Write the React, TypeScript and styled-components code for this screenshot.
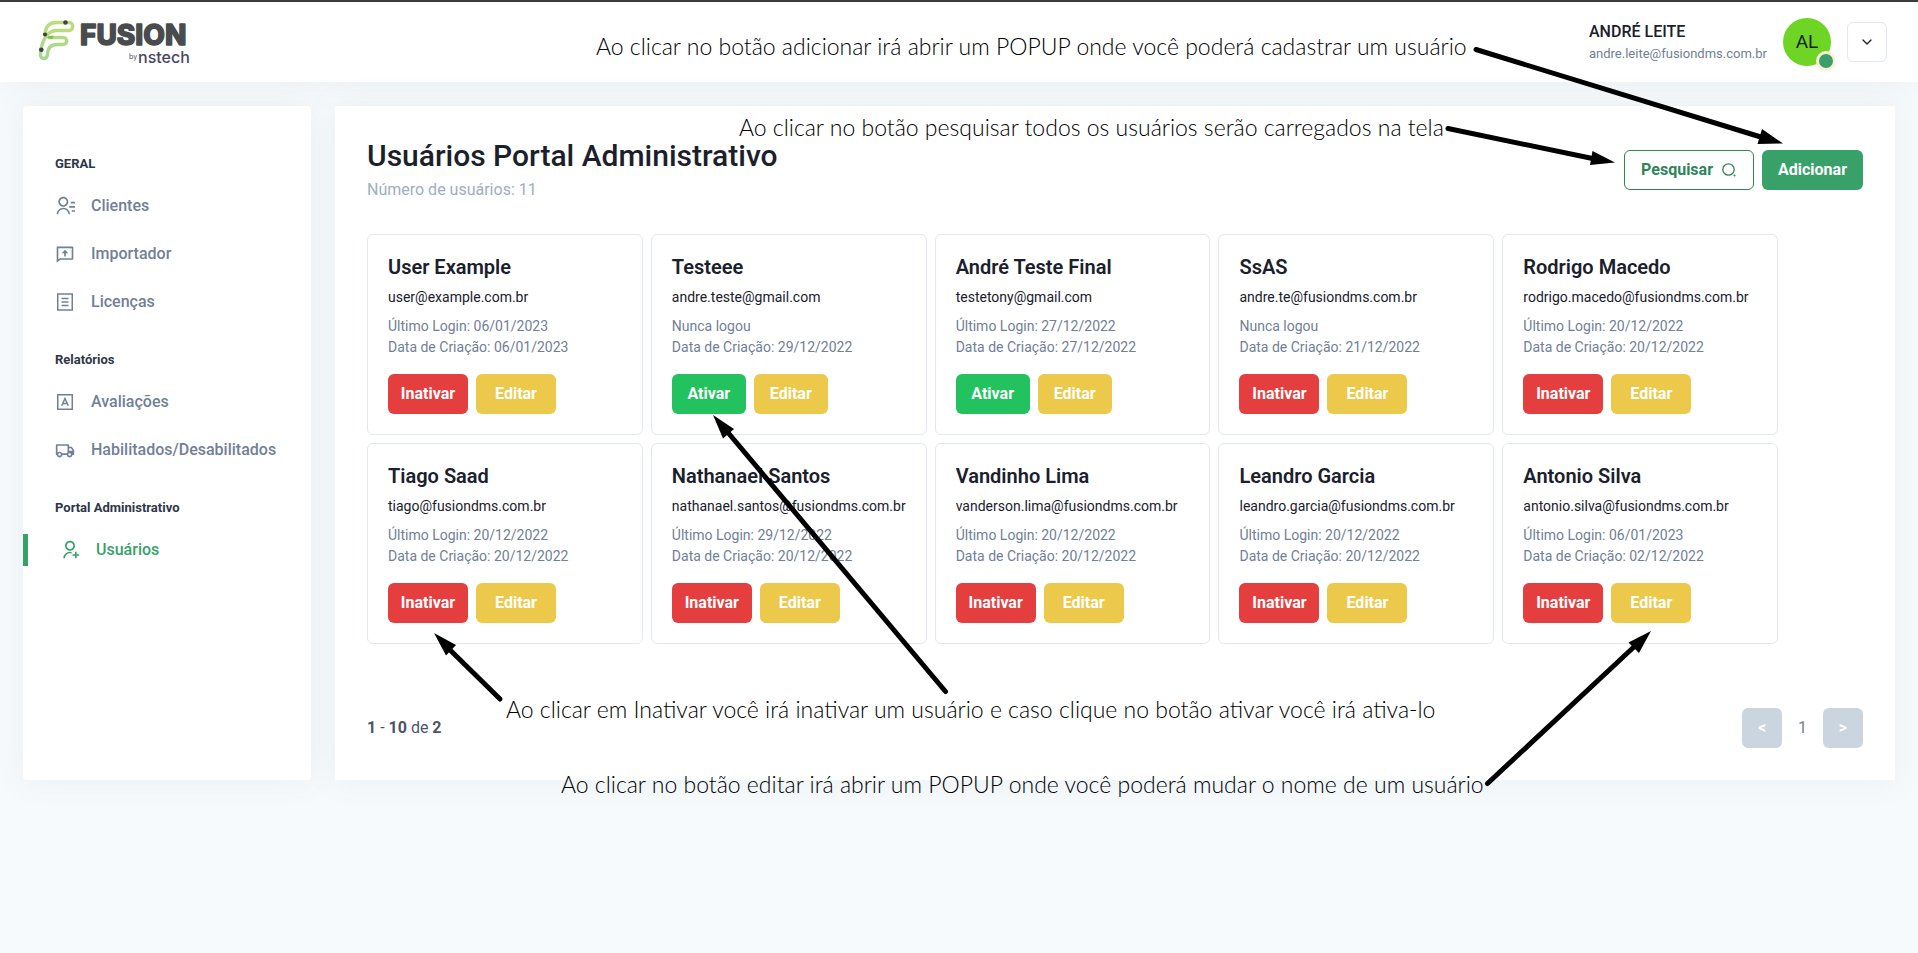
import React from "react";
import styled, { createGlobalStyle, css } from "styled-components";
import {
  RiContactsLine,
  RiChatUploadLine,
  RiTruckLine,
  RiUserAddLine,
} from "react-icons/ri";
import { FiChevronDown } from "react-icons/fi";

const GlobalStyle = createGlobalStyle`
  *, *::before, *::after { box-sizing: border-box; }
  body {
    margin: 0;
    background: #f7fafc;
    color: #1a202c;
    font-family: Roboto, "Liberation Sans", sans-serif;
    font-size: 16px;
    line-height: 24px;
  }
  h1, h2, h3, p, ul { margin: 0; padding: 0; }
  ul { list-style: none; }
  a { color: inherit; text-decoration: none; }
  button { font: inherit; cursor: pointer; }
`;

const Page = styled.div`
  position: relative;
  min-height: 100vh;
  border-top: 2px solid #3c3a3c;
`;

const softShadow = css`
  box-shadow: 0 0 32px rgba(82, 110, 140, 0.08);
`;

const TopBar = styled.header`
  display: flex;
  align-items: center;
  justify-content: space-between;
  height: 80px;
  padding: 0 31px 0 37px;
  background: #fff;
  ${softShadow}
`;

const LogoMark = styled.svg`
  display: block;
  overflow: visible;
`;

const Account = styled.div`
  display: flex;
  align-items: center;
  gap: 16px;
`;

const AccountName = styled.p`
  font-weight: 500;
`;

const AccountEmail = styled.p`
  font-size: 13px;
  line-height: 20px;
  color: #718096;
`;

const Avatar = styled.div`
  position: relative;
  display: grid;
  place-items: center;
  width: 48px;
  height: 48px;
  border-radius: 50%;
  background: #6fd525;
  font-size: 19px;
`;

const StatusDot = styled.span`
  position: absolute;
  right: -5px;
  bottom: -5px;
  width: 20px;
  height: 20px;
  border: 3px solid #ffefd5;
  border-radius: 50%;
  background: #38a169;
`;

const MenuButton = styled.button`
  display: grid;
  place-items: center;
  width: 40px;
  height: 40px;
  padding: 0;
  border: 1px solid #e2e8f0;
  border-radius: 6px;
  background: #fff;
  color: #1a202c;
`;

const Body = styled.div`
  display: flex;
  gap: 24px;
  padding: 24px 23px;
`;

const Sidebar = styled.nav`
  display: flex;
  flex-direction: column;
  flex: none;
  gap: 32px;
  width: 288px;
  padding: 48px 0;
  border-radius: 4px;
  background: #fff;
  ${softShadow}
`;

const NavHeading = styled.h2`
  margin-bottom: 16px;
  padding-left: 32px;
  font-size: 13px;
  font-weight: 700;
  line-height: 20px;
  color: #2d3748;
`;

const NavList = styled.ul`
  display: grid;
  gap: 16px;
`;

const NavLink = styled.a<{ $active?: boolean }>`
  display: flex;
  align-items: center;
  gap: 16px;
  height: 32px;
  padding-left: 32px;
  border-left: 0 solid #38a169;
  font-weight: 500;
  color: #718096;

  ${(p) =>
    p.$active &&
    css`
      border-left-width: 5px;
      color: #38a169;
    `}
`;

const Panel = styled.main`
  flex: 1;
  min-width: 0;
  padding: 32px;
  background: #fff;
  ${softShadow}
`;

const PanelHeader = styled.div`
  display: flex;
  align-items: center;
  justify-content: space-between;
  margin-bottom: 32px;
`;

const Title = styled.h1`
  margin-bottom: 4px;
  font-size: 30px;
  font-weight: 500;
  line-height: 36px;
`;

const Subtitle = styled.p`
  color: #a0aec0;
`;

const Row = styled.div`
  display: flex;
  gap: 8px;
`;

type Tone = "primary" | "outline" | "danger" | "success" | "warning";

const tones = {
  primary: css`
    padding: 0 16px;
    background: #38a169;
    color: #fff;
  `,
  outline: css`
    padding: 0 16px;
    border: 1px solid #2f855a;
    background: #fff;
    color: #2f855a;
  `,
  danger: css`
    padding: 0;
    background: #e53e3e;
    color: #fff;
  `,
  success: css`
    padding: 0;
    background: #22c35e;
    color: #fff;
  `,
  warning: css`
    padding: 0;
    background: #ecc94b;
    color: #fff;
  `,
};

const Button = styled.button<{ $tone: Tone }>`
  display: inline-flex;
  align-items: center;
  justify-content: center;
  gap: 8px;
  height: 40px;
  border: 0;
  border-radius: 6px;
  font-weight: 700;
  ${(p) => tones[p.$tone]}
`;

const CardGrid = styled.ul`
  display: grid;
  grid-template-columns: repeat(5, 1fr);
  gap: 8px;
  width: fit-content;
`;

const Card = styled.li`
  padding: 20px;
  border: 1px solid #e2e8f0;
  border-radius: 6px;
`;

const CardName = styled.h3`
  margin-bottom: 8px;
  font-size: 20px;
  font-weight: 600;
  line-height: 24px;
`;

const CardEmail = styled.p`
  margin-bottom: 8px;
  font-size: 14px;
  line-height: 21px;
`;

const CardMeta = styled.p`
  font-size: 14px;
  line-height: 21px;
  color: #718096;
`;

const CardActions = styled.div<{ $wide: boolean }>`
  display: grid;
  grid-template-columns: repeat(2, ${(p) => (p.$wide ? 80 : 74)}px);
  gap: 8px;
  margin-top: 16px;
`;

const Pager = styled.div`
  display: flex;
  align-items: center;
  justify-content: space-between;
  margin-top: 64px;
  color: #4a5568;
`;

const PagerControls = styled.div`
  display: flex;
  align-items: center;
  gap: 16px;
  color: #718096;
`;

const PageButton = styled.button`
  width: 40px;
  height: 40px;
  padding: 0;
  border: 0;
  border-radius: 6px;
  background: #cbd5e0;
  color: #fff;
  font-weight: 700;
`;

const Notes = styled.div`
  position: absolute;
  inset: -2px 0 0;
  overflow: hidden;
  pointer-events: none;
`;

const Note = styled.p<{ $x: number; $y: number }>`
  position: absolute;
  left: ${(p) => p.$x}px;
  top: ${(p) => p.$y}px;
  font-family: Lato, "Open Sans", sans-serif;
  font-size: 23px;
  font-weight: 300;
  line-height: 30px;
  white-space: nowrap;
  color: #000;
`;

const Arrows = styled.svg`
  position: absolute;
  top: 0;
  left: 0;
`;

const Logo = () => (
  <LogoMark width="156" height="52" viewBox="37 16 156 52" role="img" aria-label="Fusion by nstech">
    <defs>
      <linearGradient id="leaf" x1="0" y1="0" x2="0" y2="1">
        <stop offset="0" stopColor="#c0dc78" />
        <stop offset="1" stopColor="#a2d894" />
      </linearGradient>
    </defs>
    <path
      d="M45 33C46 26 50 22.500 56 22.500H69C74 22.500 74 30.500 69 30.500H56C48 31 43 39 41 49L40.500 54C40 60 47 60 47.500 54C48 47 52 44.500 57 44.500H63C68 44.500 68 37.500 63 37.500H49"
      fill="none"
      stroke="url(#leaf)"
      strokeWidth="3.400"
      strokeLinecap="round"
    />
    <path d="M47 38q2-3 7-2l-2 3z" fill="#7cc142" />
    <g fill="#3e4345">
      <circle cx="65.500" cy="22.500" r="2.300" />
      <circle cx="45" cy="34.500" r="2.100" />
      <circle cx="41.300" cy="49.800" r="2.300" />
    </g>
    <text
      x="80"
      y="45"
      fontFamily="Inter, sans-serif"
      fontSize="28"
      fontWeight="800"
      fill="#484c4e"
      stroke="#484c4e"
      strokeWidth="1.400"
      strokeLinejoin="round"
    >
      FUSION
    </text>
    <text x="129" y="59" fontFamily="Inter, sans-serif" fontSize="7" fill="#4b4660">
      by
    </text>
    <text x="138" y="63" fontFamily="Inter, sans-serif" fontSize="16" fontWeight="500" fill="#4b4660">
      nstech
    </text>
  </LogoMark>
);

const ListIcon = () => (
  <svg width="20" height="20" viewBox="0 0 20 20" fill="none" stroke="currentColor" strokeWidth="1.500">
    <rect x="2.750" y="2" width="14.500" height="16" />
    <path d="M6.500 6.500h7M6.500 10h7M6.500 13.500h7" />
  </svg>
);

const GradeIcon = () => (
  <svg width="20" height="20" viewBox="0 0 20 20" fill="none" stroke="currentColor" strokeWidth="1.500">
    <rect x="2.750" y="2.750" width="14.500" height="14.500" />
    <path d="M6.700 13.800L10 6.500l3.300 7.300M8 11.500h4" />
  </svg>
);

const SearchIcon = () => (
  <svg width="16" height="16" viewBox="0 0 16 16" fill="none" stroke="currentColor" strokeWidth="1.300">
    <circle cx="7.500" cy="7.500" r="5.700" />
    <path d="M12.700 12.700l1.600 1.600" />
  </svg>
);

type NavItem = { label: string; icon: React.ReactNode; active?: boolean };

const navigation: { heading: string; items: NavItem[] }[] = [
  {
    heading: "GERAL",
    items: [
      { label: "Clientes", icon: <RiContactsLine size={20} /> },
      { label: "Importador", icon: <RiChatUploadLine size={20} /> },
      { label: "Licenças", icon: <ListIcon /> },
    ],
  },
  {
    heading: "Relatórios",
    items: [
      { label: "Avaliações", icon: <GradeIcon /> },
      { label: "Habilitados/Desabilitados", icon: <RiTruckLine size={20} /> },
    ],
  },
  {
    heading: "Portal Administrativo",
    items: [{ label: "Usuários", icon: <RiUserAddLine size={20} />, active: true }],
  },
];

const users = [
  { name: "User Example", email: "user@example.com.br", login: "06/01/2023", created: "06/01/2023", active: true },
  { name: "Testeee", email: "andre.teste@gmail.com", login: null, created: "29/12/2022", active: false },
  { name: "André Teste Final", email: "testetony@gmail.com", login: "27/12/2022", created: "27/12/2022", active: false },
  { name: "SsAS", email: "andre.te@fusiondms.com.br", login: null, created: "21/12/2022", active: true },
  { name: "Rodrigo Macedo", email: "rodrigo.macedo@fusiondms.com.br", login: "20/12/2022", created: "20/12/2022", active: true },
  { name: "Tiago Saad", email: "tiago@fusiondms.com.br", login: "20/12/2022", created: "20/12/2022", active: true },
  { name: "Nathanael Santos", email: "nathanael.santos@fusiondms.com.br", login: "29/12/2022", created: "20/12/2022", active: true },
  { name: "Vandinho Lima", email: "vanderson.lima@fusiondms.com.br", login: "20/12/2022", created: "20/12/2022", active: true },
  { name: "Leandro Garcia", email: "leandro.garcia@fusiondms.com.br", login: "20/12/2022", created: "20/12/2022", active: true },
  { name: "Antonio Silva", email: "antonio.silva@fusiondms.com.br", login: "06/01/2023", created: "02/12/2022", active: true },
];

const notes = [
  { x: 596, y: 31, text: "Ao clicar no botão adicionar irá abrir um POPUP onde você poderá cadastrar um usuário" },
  { x: 739, y: 112, text: "Ao clicar no botão pesquisar todos os usuários serão carregados na tela" },
  { x: 506, y: 694, text: "Ao clicar em Inativar você irá inativar um usuário e caso clique no botão ativar você irá ativa-lo" },
  { x: 561, y: 769, text: "Ao clicar no botão editar irá abrir um POPUP onde você poderá mudar o nome de um usuário" },
];

const arrows = [
  { line: "M1476 49.500L1764 138", head: "1783,143.500 1762,129 1757.500,144" },
  { line: "M1448 128.500L1595 159", head: "1615,162.500 1592.500,151 1590,165" },
  { line: "M945.500 691.500L725 429", head: "713,415 734,429 723,438.500" },
  { line: "M500 699L447 647", head: "434,633 456,645 446,655.500" },
  { line: "M1487.500 783.500L1636 645", head: "1651,631 1628.500,642.500 1639,653" },
];

export default function App() {
  return (
    <Page>
      <GlobalStyle />
      <TopBar>
        <Logo />
        <Account>
          <div>
            <AccountName>ANDRÉ LEITE</AccountName>
            <AccountEmail>andre.leite@fusiondms.com.br</AccountEmail>
          </div>
          <Avatar>
            AL
            <StatusDot />
          </Avatar>
          <MenuButton aria-label="Abrir menu">
            <FiChevronDown size={16} />
          </MenuButton>
        </Account>
      </TopBar>

      <Body>
        <Sidebar>
          {navigation.map((group) => (
            <section key={group.heading}>
              <NavHeading>{group.heading}</NavHeading>
              <NavList>
                {group.items.map((item) => (
                  <li key={item.label}>
                    <NavLink href="#" $active={item.active}>
                      {item.icon}
                      {item.label}
                    </NavLink>
                  </li>
                ))}
              </NavList>
            </section>
          ))}
        </Sidebar>

        <Panel>
          <PanelHeader>
            <div>
              <Title>Usuários Portal Administrativo</Title>
              <Subtitle>Número de usuários: 11</Subtitle>
            </div>
            <Row>
              <Button $tone="outline">
                Pesquisar
                <SearchIcon />
              </Button>
              <Button $tone="primary">Adicionar</Button>
            </Row>
          </PanelHeader>

          <CardGrid>
            {users.map((user) => (
              <Card key={user.email}>
                <CardName>{user.name}</CardName>
                <CardEmail>{user.email}</CardEmail>
                <CardMeta>{user.login ? `Último Login: ${user.login}` : "Nunca logou"}</CardMeta>
                <CardMeta>Data de Criação: {user.created}</CardMeta>
                <CardActions $wide={user.active}>
                  <Button $tone={user.active ? "danger" : "success"}>
                    {user.active ? "Inativar" : "Ativar"}
                  </Button>
                  <Button $tone="warning">Editar</Button>
                </CardActions>
              </Card>
            ))}
          </CardGrid>

          <Pager>
            <p>
              <b>1</b> - <b>10</b> de <b>2</b>
            </p>
            <PagerControls>
              <PageButton>&lt;</PageButton>
              <span>1</span>
              <PageButton>&gt;</PageButton>
            </PagerControls>
          </Pager>
        </Panel>
      </Body>

      <Notes>
        <Arrows width="1918" height="953" aria-hidden="true">
          {arrows.map((arrow) => (
            <g key={arrow.line}>
              <path d={arrow.line} stroke="#000" strokeWidth="5" strokeLinecap="round" />
              <polygon points={arrow.head} />
            </g>
          ))}
        </Arrows>
        {notes.map((note) => (
          <Note key={note.text} $x={note.x} $y={note.y}>
            {note.text}
          </Note>
        ))}
      </Notes>
    </Page>
  );
}
